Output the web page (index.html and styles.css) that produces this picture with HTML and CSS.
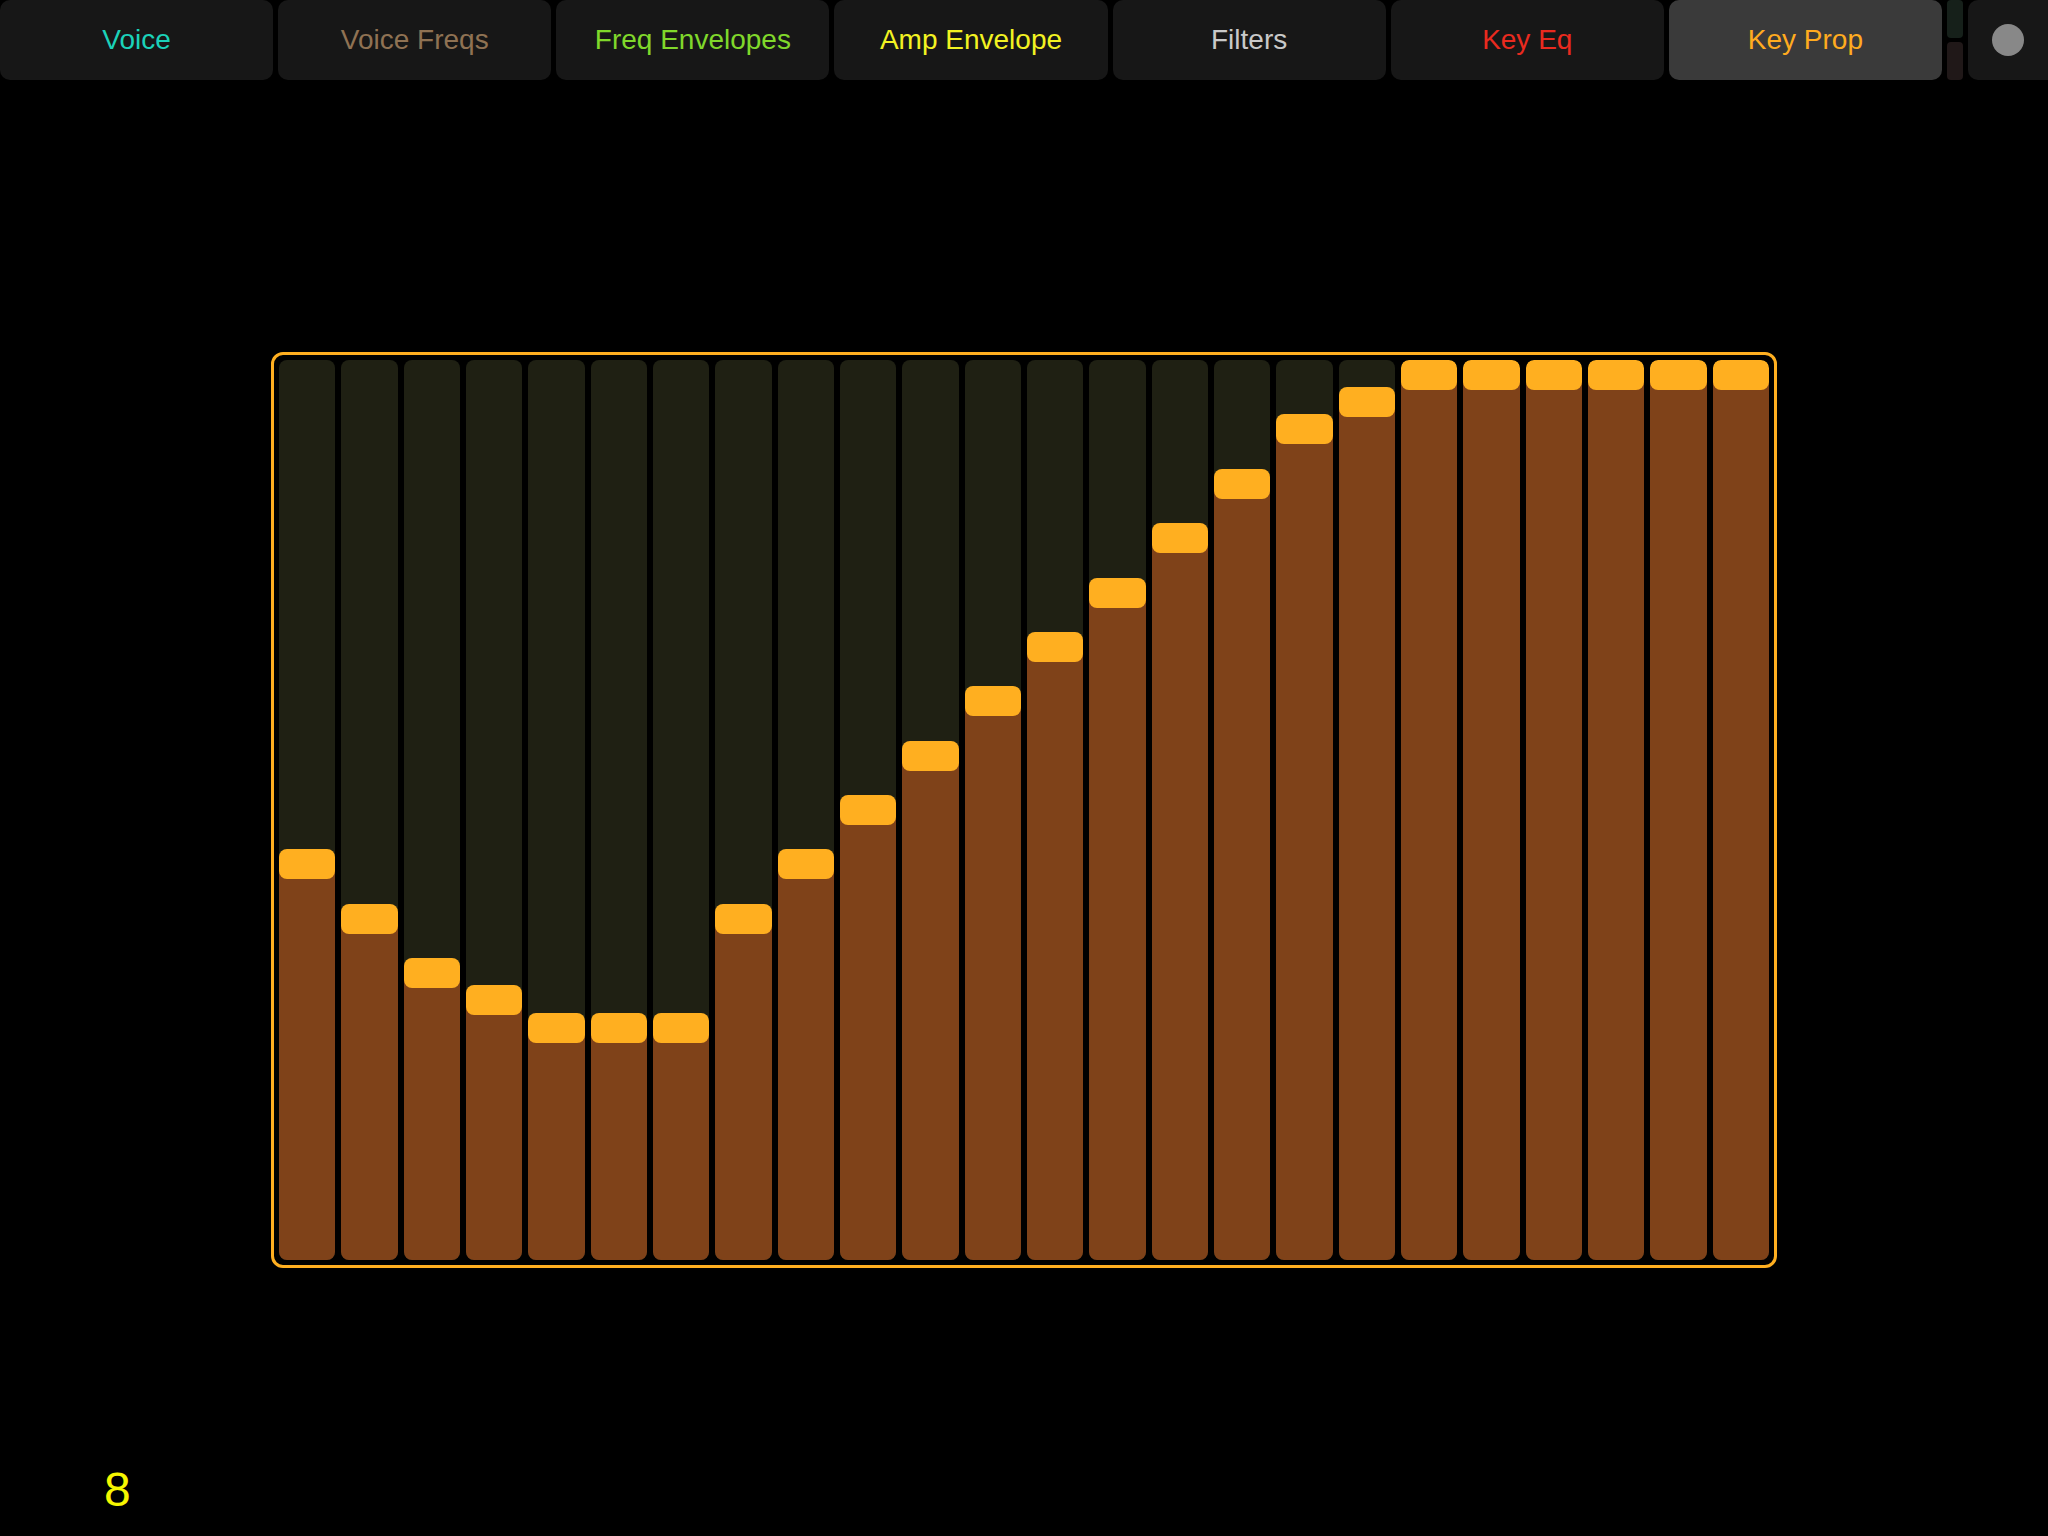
FILE: index.html
```html
<!DOCTYPE html>
<html lang="en">
<head>
    <meta charset="UTF-8">
    <title>Key Prop</title>
    <link rel="stylesheet" href="styles.css">
</head>
<body>
    <div class="topbar">
        <div class="tab voice">Voice</div>
        <div class="tab voice-freqs">Voice Freqs</div>
        <div class="tab freq-env">Freq Envelopes</div>
        <div class="tab amp-env">Amp Envelope</div>
        <div class="tab filters">Filters</div>
        <div class="tab key-eq">Key Eq</div>
        <div class="tab key-prop active">Key Prop</div>
        <div class="meter">
            <div class="meter-top"></div>
            <div class="meter-bottom"></div>
        </div>
        <div class="menu-btn"><span class="dot"></span></div>
    </div>

    <div class="main">
        <div class="slider-frame" id="sliders"></div>
        <div class="readout">8</div>
    </div>

    <script>
        // valores em 32 avos
        const valores = [18, 20, 22, 23, 24, 24, 24, 20, 18, 16, 14, 12, 10, 8, 6, 4, 2, 1, 0, 0, 0, 0, 0, 0];
        const curso = 870;

        const frame = document.getElementById('sliders');
        valores.forEach(function (n) {
            const v = 1 - n / 32;
            const track = document.createElement('div');
            track.className = 'track';
            track.innerHTML = '<div class="knob"></div><div class="fill" style="height:' + (v * curso + 15) + 'px"></div>';
            frame.appendChild(track);
        });
    </script>
</body>
</html>
```

FILE: styles.css
```css
* {
    margin: 0;
    padding: 0;
    box-sizing: border-box;
}

body {
    width: 2048px;
    height: 1536px;
    background-color: #000;
    font-family: "Liberation Sans", Arial, sans-serif;
    display: flex;
    flex-direction: column;
    overflow: hidden;
}

.topbar {
    height: 80px;
    display: flex;
    gap: 5px;
    flex-shrink: 0;
}

.tab {
    flex: 1;
    background-color: #171717;
    border-radius: 10px;
    display: flex;
    align-items: center;
    justify-content: center;
    font-size: 28px;
}

.tab.active {
    background-color: #3a3a3a;
}

.voice { color: #1bd2b9; }
.voice-freqs { color: #8f7253; }
.freq-env { color: #80d82b; }
.amp-env { color: #f2f222; }
.filters { color: #c9c9c9; }
.key-eq { color: #ea2a1f; }
.key-prop { color: #ffab1f; }

.meter {
    width: 16px;
    display: flex;
    flex-direction: column;
    gap: 4px;
}

.meter-top,
.meter-bottom {
    flex: 1;
    border-radius: 4px;
}

.meter-top {
    background-color: #16201a;
}

.meter-bottom {
    background-color: #201818;
}

.menu-btn {
    width: 80px;
    background-color: #171717;
    border-radius: 10px 0 0 10px;
    display: flex;
    align-items: center;
    justify-content: center;
}

.dot {
    width: 32px;
    height: 32px;
    border-radius: 50%;
    background-color: #888;
}

.main {
    flex: 1;
    position: relative;
    display: flex;
    align-items: center;
    justify-content: center;
    padding-top: 4px;
}

.slider-frame {
    width: 1506px;
    height: 916px;
    border: 3px solid #ffaf20;
    border-radius: 12px;
    padding: 5px;
    display: flex;
    gap: 6px;
}

.track {
    flex: 1;
    height: 900px;
    background-color: #1f2013;
    border-radius: 8px;
    overflow: hidden;
    display: flex;
    flex-direction: column;
    justify-content: flex-end;
}

.knob {
    height: 30px;
    flex-shrink: 0;
    background-color: #ffaf20;
    border-radius: 8px;
    margin-bottom: -15px;
    position: relative;
    z-index: 1;
}

.fill {
    flex-shrink: 0;
    background-color: #7f4219;
}

.readout {
    position: absolute;
    left: 104px;
    bottom: 22px;
    font-size: 48px;
    line-height: 1;
    color: #f6f600;
}
```
